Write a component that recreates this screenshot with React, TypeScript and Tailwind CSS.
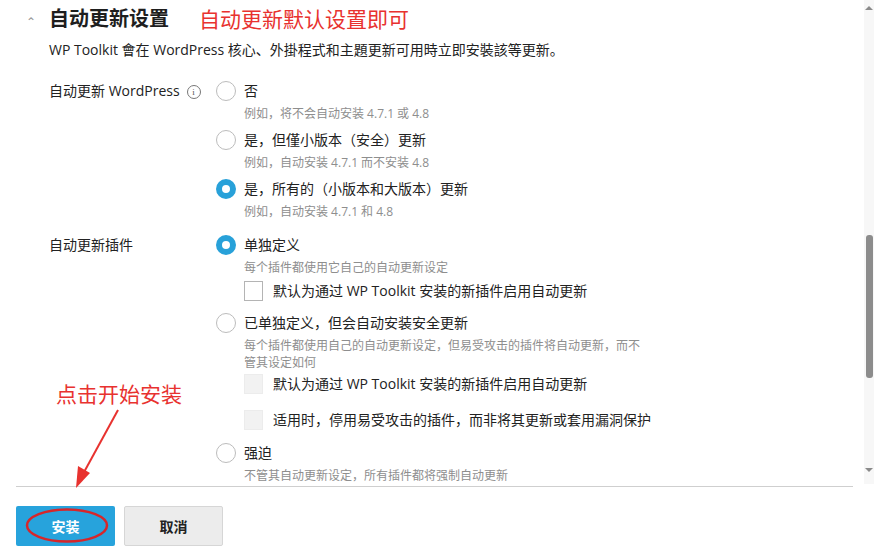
import React from "react";

const font = { fontFamily: '"Open Sans", "Noto Sans CJK SC", sans-serif' };

function Radio({ checked }: { checked?: boolean }) {
  return checked ? (
    <span className="box-border inline-block h-[20px] w-[20px] shrink-0 rounded-full border-[6px] border-[#28a1d9] bg-white" />
  ) : (
    <span className="box-border inline-block h-[20px] w-[20px] shrink-0 rounded-full border border-[#bcbcbc] bg-white" />
  );
}

function Checkbox({ disabled }: { disabled?: boolean }) {
  return disabled ? (
    <span className="box-border inline-block h-[20px] w-[19px] shrink-0 border border-[#ececec] bg-[#f2f2f2]" />
  ) : (
    <span className="box-border inline-block h-[20px] w-[19px] shrink-0 border border-[#b4b4b4] bg-white" />
  );
}

function Option({
  checked,
  label,
  hint,
  children,
}: {
  checked?: boolean;
  label: string;
  hint: string;
  children?: React.ReactNode;
}) {
  return (
    <div>
      <div className="flex h-[20px] items-center gap-[8px]">
        <Radio checked={checked} />
        <span className="text-[14px] leading-[20px] text-[#222]">{label}</span>
      </div>
      <p className="mt-[4px] max-w-[430px] pl-[28px] text-[12px] leading-[17px] text-[#8e8e8e]">{hint}</p>
      {children}
    </div>
  );
}

function CheckRow({ disabled, label, className }: { disabled?: boolean; label: string; className?: string }) {
  return (
    <div className={"flex h-[20px] items-center gap-[10px] pl-[28px] " + (className ?? "")}>
      <Checkbox disabled={disabled} />
      <span className="text-[14px] leading-[20px] text-[#222]">{label}</span>
    </div>
  );
}

function Scrollbar() {
  return (
    <div className="flex w-[10px] shrink-0 flex-col items-center bg-[#f7f7f7]">
      <div className="mt-[6px] h-0 w-0 border-x-[4px] border-b-[4px] border-x-transparent border-b-[#8a8a8a]" />
      <div className="mt-[225px] h-[143px] w-[7px] rounded-[3px] bg-[#8c8c8c]" />
      <div className="mt-[90px] h-0 w-0 border-x-[4px] border-t-[4px] border-x-transparent border-t-[#8a8a8a]" />
    </div>
  );
}

export default function App() {
  return (
    <div className="relative h-[555px] w-[874px] overflow-hidden bg-white" style={font}>
      <div className="flex h-[484px]">
        <div className="flex-1 overflow-hidden">
          {/* header */}
          <div className="box-content flex h-[28px] items-center pt-[5px]">
            <span className="ml-[26px] mt-[6px] w-[23px] text-[12px] leading-none text-[#999]">&#8963;</span>
            <h2 className="text-[20px] font-bold leading-[28px] text-[#1e1e1e]">自动更新设置</h2>
            <span className="ml-[30px] text-[21px] leading-[28px] text-[#e8322f]">自动更新默认设置即可</span>
          </div>
          <p className="ml-[49px] mt-[7px] text-[14px] leading-[20px] text-[#222]">
            WP Toolkit 會在 WordPress 核心、外掛程式和主題更新可用時立即安裝該等更新。
          </p>

          {/* WordPress */}
          <div className="mt-[21px] flex">
            <div className="box-border flex h-[20px] w-[216px] shrink-0 items-center pl-[49px]">
              <span className="text-[14px] leading-[20px] text-[#222]">自动更新 WordPress</span>
              <span
                className="ml-[7px] mt-[2px] flex h-[14px] w-[14px] items-center justify-center rounded-full border border-[#777] text-[9px] leading-none text-[#555]"
                style={{ fontFamily: '"Liberation Serif", serif' }}
              >
                i
              </span>
            </div>
            <div className="flex flex-col gap-[8px]">
              <Option label="否" hint="例如，将不会自动安装 4.7.1 或 4.8" />
              <Option label="是，但僅小版本（安全）更新" hint="例如，自动安装 4.7.1 而不安装 4.8" />
              <Option checked label="是，所有的（小版本和大版本）更新" hint="例如，自动安装 4.7.1 和 4.8" />
            </div>
          </div>

          {/* plugins */}
          <div className="mt-[15px] flex">
            <div className="box-border flex h-[20px] w-[216px] shrink-0 items-center pl-[49px]">
              <span className="text-[14px] leading-[20px] text-[#222]">自动更新插件</span>
            </div>
            <div className="flex flex-col">
              <Option checked label="单独定义" hint="每个插件都使用它自己的自动更新设定">
                <CheckRow className="mt-[5px]" label="默认为通过 WP Toolkit 安装的新插件启用自动更新" />
              </Option>
              <div className="mt-[12px]">
                <Option label="已单独定义，但会自动安装安全更新" hint="每个插件都使用自己的自动更新设定，但易受攻击的插件将自动更新，而不管其设定如何">
                  <CheckRow disabled className="mt-[3px]" label="默认为通过 WP Toolkit 安装的新插件启用自动更新" />
                  <CheckRow disabled className="mt-[16px]" label="适用时，停用易受攻击的插件，而非将其更新或套用漏洞保护" />
                </Option>
              </div>
              <div className="mt-[13px]">
                <Option label="强迫" hint="不管其自动更新设定，所有插件都将强制自动更新" />
              </div>
            </div>
          </div>
        </div>
        <Scrollbar />
      </div>

      {/* footer */}
      <div className="ml-[16px] mr-[21px] mt-[2px] h-px bg-[#cfcfcf]" />
      <div className="ml-[16px] mt-[19px] flex gap-[9px]">
        <button className="h-[40px] w-[99px] rounded-[2px] bg-[#27a3dc] text-[14px] font-bold text-white">安装</button>
        <button className="box-border h-[40px] w-[99px] rounded-[2px] border border-[#d6d6d6] bg-[#ececec] text-[14px] font-bold text-[#222]">
          取消
        </button>
      </div>

      {/* annotations */}
      <span className="absolute left-[56px] top-[380px] text-[21px] leading-[28px] text-[#e8322f]">点击开始安装</span>
      <svg className="absolute left-0 top-0" width="874" height="555" viewBox="0 0 874 555" fill="none">
        <path d="M118 410 L83 474" stroke="#e8322f" strokeWidth="2" />
        <path d="M76 488 L78 466 L90 473 Z" fill="#e8322f" />
        <ellipse cx="67" cy="525.5" rx="40" ry="16" stroke="#d7262a" strokeWidth="2.5" />
      </svg>
    </div>
  );
}
